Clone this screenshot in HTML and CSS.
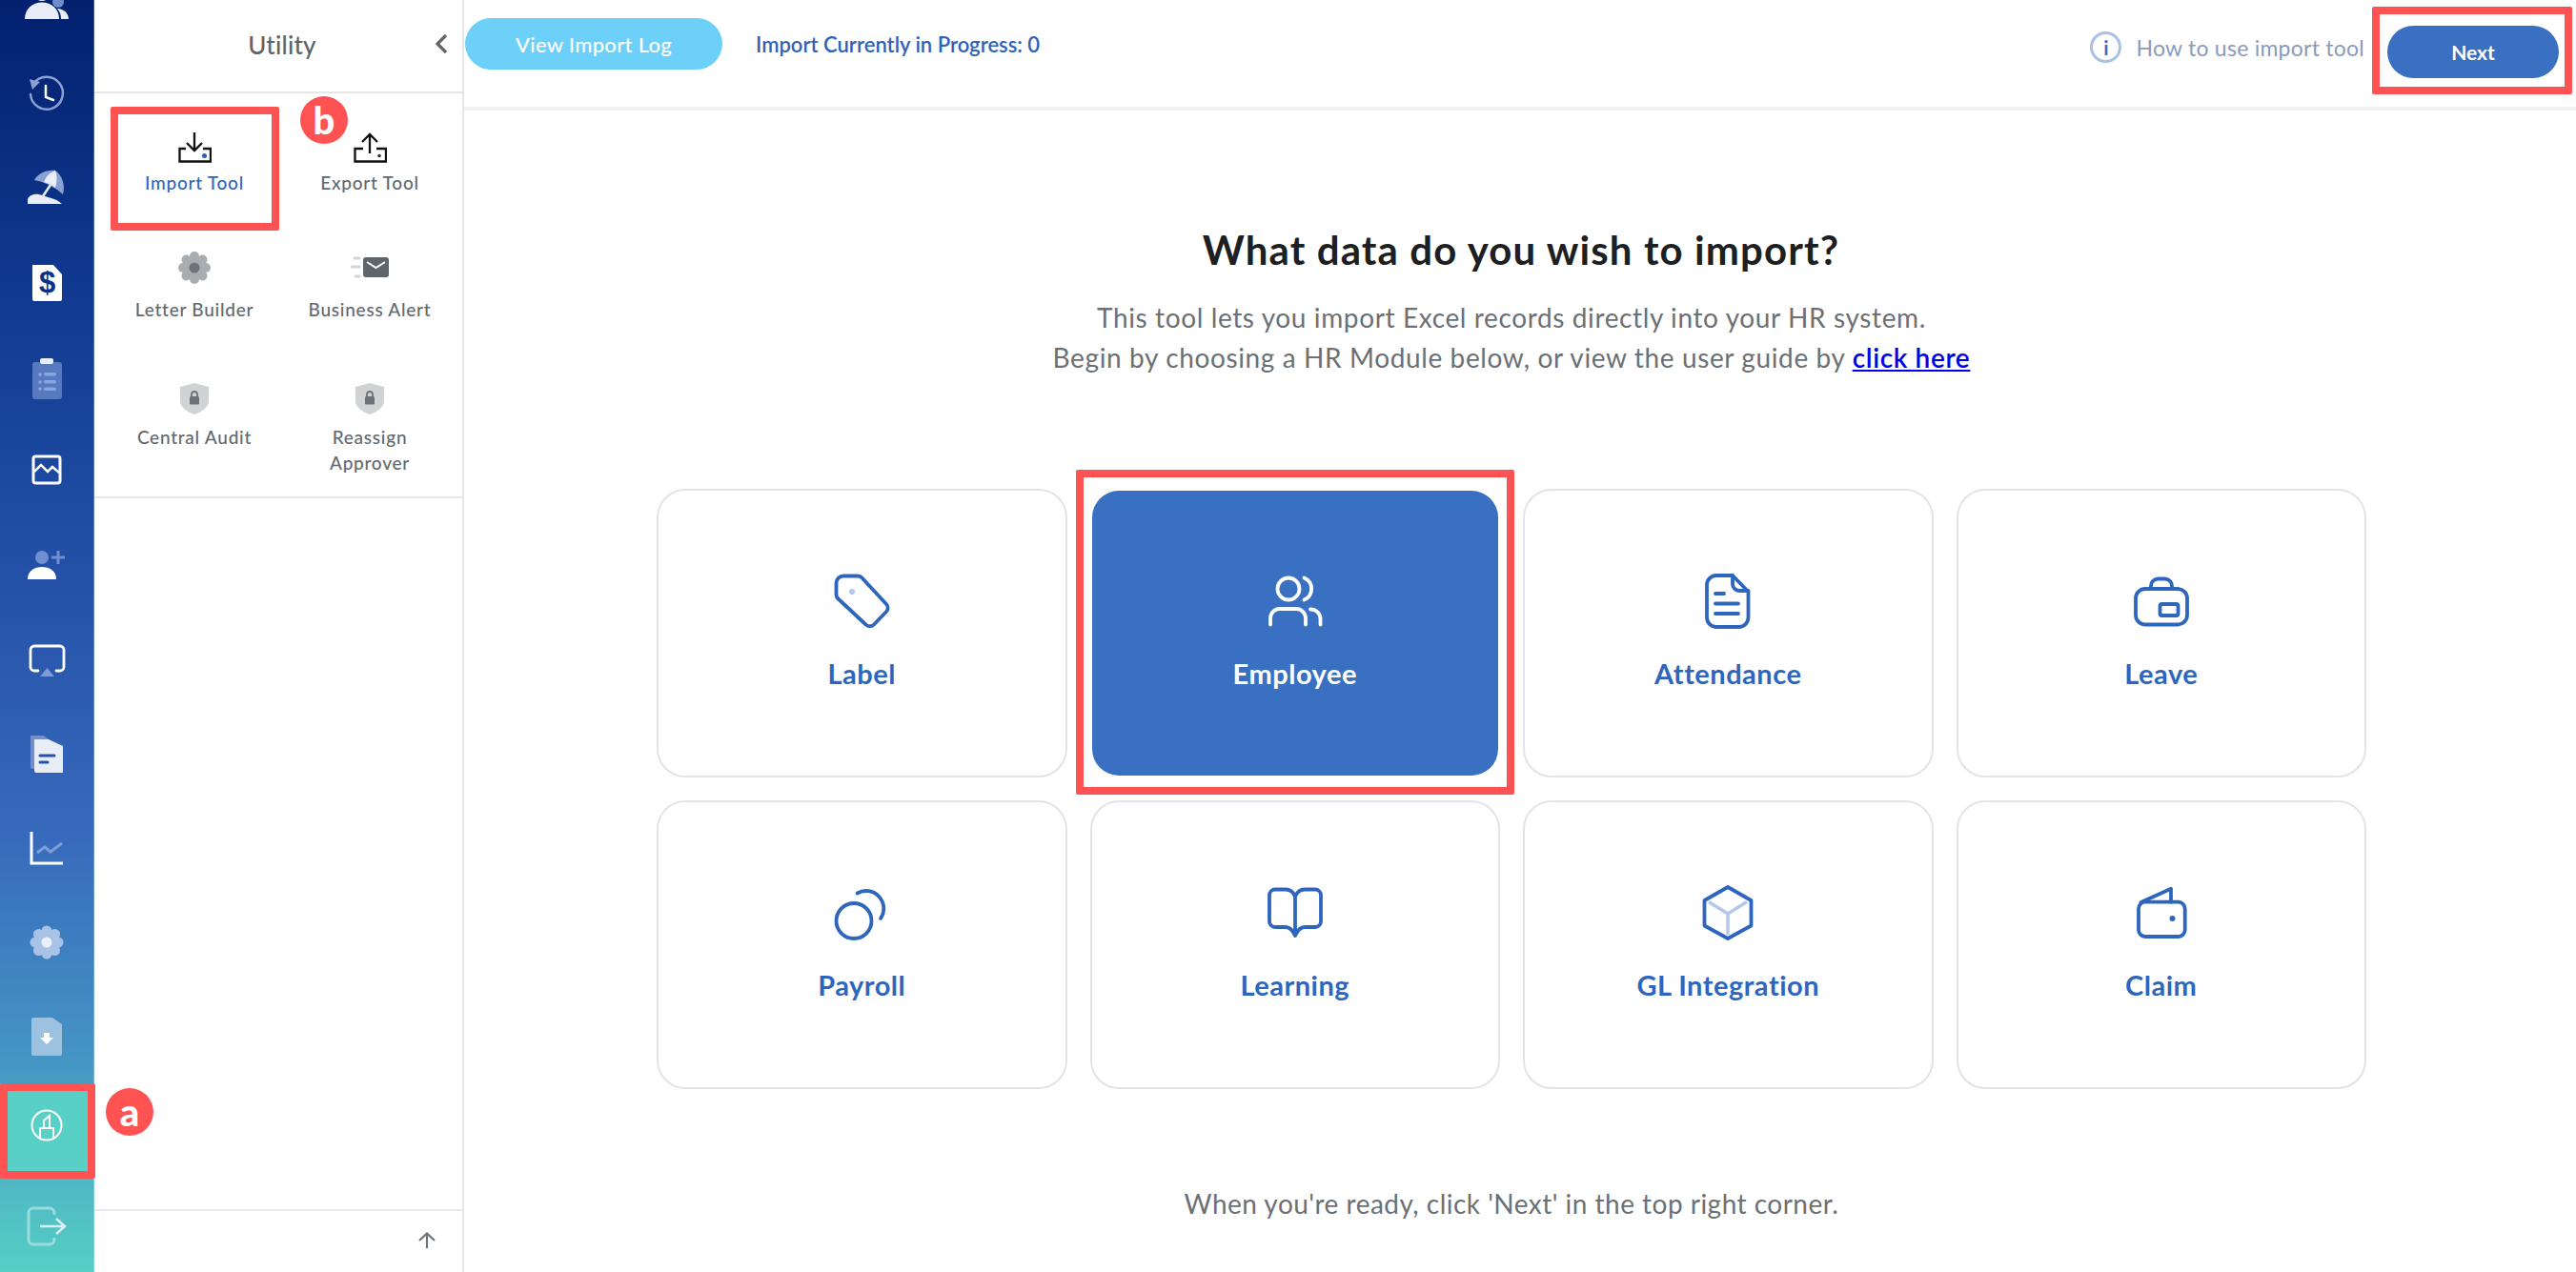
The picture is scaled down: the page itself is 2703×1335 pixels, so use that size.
FILE: index.html
```html
<!DOCTYPE html>
<html lang="en">
<head>
<meta charset="utf-8">
<title>Import Tool</title>
<link rel="stylesheet" href="styles.css">
</head>
<body>
<div class="app">
  <nav class="rail">
    <ul class="rail-list">
      <li class="rail-item"><svg class="ri" viewBox="0 0 48 48"><circle cx="19" cy="16" r="9" fill="#e8edf8"/><circle cx="36" cy="26" r="6" fill="#6f8ccb"/><path d="M1 44C1 33 9 26.500 19 26.500S37 33 37 44Z" fill="#e8edf8"/><path d="M35 33C42 33 47 38 47 44H39C39 40 38 36 35 33Z" fill="#e8edf8"/></svg></li>
      <li class="rail-item"><svg class="ri" viewBox="0 0 48 48"><path d="M10 13A17 17 0 1 1 7 24" fill="none" stroke="#8ca1d3" stroke-width="2.500" stroke-linecap="round"/><path d="M6 8l11 3-8 8Z" fill="#8ca1d3"/><path d="M23 15V27L31 30" fill="none" stroke="#fff" stroke-width="2.500" stroke-linecap="round"/></svg></li>
      <li class="rail-item"><svg class="ri" viewBox="0 0 48 48"><path d="M11 15C15 8 24 4 33 5C40 10 44 20 41 30Q28 18 11 15Z" fill="#8ca1d3"/><path d="M33 5C26 8 23 12 21 17Q28 19 33 23C35 17 35 10 33 5Z" fill="#e8edf8"/><path d="M28 20L20 32" stroke="#e8edf8" stroke-width="2.500"/><path d="M4 40V36C4 32 10 29 16 30C24 33 34 34 40 40Z" fill="#e8edf8"/></svg></li>
      <li class="rail-item"><svg class="ri" viewBox="0 0 48 48"><path d="M9 5H31L40 15V41A2 2 0 0 1 38 43H11A2 2 0 0 1 9 41Z" fill="#fff"/><text x="24.500" y="34" class="dollar">$</text></svg></li>
      <li class="rail-item"><svg class="ri" viewBox="0 0 48 48"><rect x="9" y="8" width="31" height="39" rx="3" fill="#5679c0"/><rect x="17" y="4" width="14" height="6" rx="2" fill="#e8edf8"/><g fill="#8ba6dc"><circle cx="17" cy="21" r="1.800"/><circle cx="17" cy="29" r="1.800"/><circle cx="17" cy="36" r="1.800"/><rect x="21" y="19" width="13" height="3.500" rx="1.700"/><rect x="21" y="27" width="13" height="3.500" rx="1.700"/><rect x="21" y="34.500" width="13" height="3.500" rx="1.700"/></g></svg></li>
      <li class="rail-item"><svg class="ri" viewBox="0 0 48 48"><rect x="10" y="9" width="28" height="28" rx="2.500" fill="none" stroke="#fff" stroke-width="3"/><path d="M11 25L18 18L25 25L30 20L37 26" fill="none" stroke="#fff" stroke-width="2.500"/></svg></li>
      <li class="rail-item"><svg class="ri" viewBox="0 0 48 48"><circle cx="19" cy="16" r="7" fill="#6f8fd0"/><path d="M4 39C4 30 11 26 19 26S34 30 34 39Z" fill="#fff"/><path d="M29 16H43M36 9V23" stroke="#6f8fd0" stroke-width="3"/></svg></li>
      <li class="rail-item"><svg class="ri" viewBox="0 0 48 48"><path d="M15 36H11A4 4 0 0 1 7 32V14A4 4 0 0 1 11 10H38A4 4 0 0 1 42 14V32A4 4 0 0 1 38 36H34" fill="none" stroke="#fff" stroke-width="2.800" stroke-linecap="round"/><path d="M17 42L24.500 33L32 42Z" fill="#7d9cd8"/></svg></li>
      <li class="rail-item"><svg class="ri" viewBox="0 0 48 48"><path d="M7 5H21L30 12V40H9A2 2 0 0 1 7 38Z" fill="#6f8fd0"/><path d="M11 9H26L41 16V44H13A2 2 0 0 1 11 42Z" fill="#e8edf8"/><path d="M17 26H32M17 33H25" stroke="#2553a9" stroke-width="3" stroke-linecap="round"/></svg></li>
      <li class="rail-item"><svg class="ri" viewBox="0 0 48 48"><path d="M8 7V40H41" fill="none" stroke="#fff" stroke-width="3"/><path d="M14 29L22 23L28 28L40 19" fill="none" stroke="#7d9cd8" stroke-width="3"/></svg></li>
      <li class="rail-item"><svg class="ri" viewBox="0 0 48 48"><g fill="#a9c3e8"><circle cx="24" cy="24" r="13"/><circle cx="24" cy="12" r="5.500"/><circle cx="24" cy="36" r="5.500"/><circle cx="12" cy="24" r="5.500"/><circle cx="36" cy="24" r="5.500"/><circle cx="15.500" cy="15.500" r="5.500"/><circle cx="32.500" cy="15.500" r="5.500"/><circle cx="15.500" cy="32.500" r="5.500"/><circle cx="32.500" cy="32.500" r="5.500"/></g><circle cx="24" cy="24" r="5.500" fill="#eaf1fb"/></svg></li>
      <li class="rail-item"><svg class="ri" viewBox="0 0 48 48"><path d="M8 6A2 2 0 0 1 10 4H30L40 11V42A2 2 0 0 1 38 44H10A2 2 0 0 1 8 42Z" fill="#9dc2e0"/><path d="M21 20H27V25H31L24 32L17 25H21Z" fill="#fff"/></svg></li>
      <li class="rail-item rail-item-active"><svg class="ri ri-up" viewBox="0 0 48 48"><ellipse cx="24" cy="24" rx="15.500" ry="15.500" fill="none" stroke="#fff" stroke-width="2"/><path d="M17 37V27H31V37M21 27V19L27 14V27" fill="none" stroke="#fff" stroke-width="2"/></svg></li>
      <li class="rail-item"><svg class="ri" viewBox="0 0 48 48"><path d="M32 13V11A5 5 0 0 0 27 6H10A5 5 0 0 0 5 11V39A5 5 0 0 0 10 44H27A5 5 0 0 0 32 39V37" fill="none" stroke="#9adbdc" stroke-width="3"/><path d="M17 25H42M34 17L43 25L34 33" fill="none" stroke="#d8f0f1" stroke-width="2.500"/></svg></li>
    </ul>
  </nav>

  <aside class="panel">
    <header class="panel-head">
      <h2 class="panel-title">Utility</h2>
      <svg class="panel-back" viewBox="0 0 16 24"><path d="M13 3L4 12L13 21" fill="none" stroke="#5e6468" stroke-width="3.200"/></svg>
    </header>
    <div class="tools">
      <div class="tool tool-current">
        <div class="tool-icon tg1"><svg class="ti" viewBox="0 0 36 36"><path d="M9 19H2.500V32.500H35V19H27" fill="none" stroke="#111" stroke-width="2.300"/><path d="M18 2V21M10 13L18 21L26 13" fill="none" stroke="#111" stroke-width="2.300"/><circle cx="28.500" cy="26.500" r="2.500" fill="#2c5fb5"/></svg></div>
        <span class="tool-label">Import Tool</span>
      </div>
      <div class="tool">
        <div class="tool-icon tg1"><svg class="ti" viewBox="0 0 36 36"><path d="M11 19H2.500V32.500H35V19H25" fill="none" stroke="#111" stroke-width="2.300"/><path d="M18 5V24M10 12L18 4L26 12" fill="none" stroke="#111" stroke-width="2.300"/><circle cx="28" cy="26.500" r="1.800" fill="#333"/></svg></div>
        <span class="tool-label">Export Tool</span>
      </div>
      <div class="tool">
        <div class="tool-icon tg2"><svg class="ti" viewBox="0 0 36 36"><g fill="#a9adb0"><circle cx="18" cy="18" r="12"/><circle cx="18" cy="6" r="5"/><circle cx="18" cy="30" r="5"/><circle cx="6" cy="18" r="5"/><circle cx="30" cy="18" r="5"/><circle cx="9.500" cy="9.500" r="5"/><circle cx="26.500" cy="9.500" r="5"/><circle cx="9.500" cy="26.500" r="5"/><circle cx="26.500" cy="26.500" r="5"/></g><circle cx="18" cy="18" r="5.500" fill="#6d7378"/></svg></div>
        <span class="tool-label">Letter Builder</span>
      </div>
      <div class="tool">
        <div class="tool-icon tg2"><svg class="ti ti-wide" viewBox="0 0 40 36"><rect x="13" y="7" width="27" height="21" rx="3" fill="#5e666c"/><path d="M17 12L26.500 18L36 12" fill="none" stroke="#fff" stroke-width="2"/><path d="M4 8H9M1 17H9M5 27H9" stroke="#d2d4d6" stroke-width="3" stroke-linecap="round"/></svg></div>
        <span class="tool-label">Business Alert</span>
      </div>
      <div class="tool">
        <div class="tool-icon tg3"><svg class="ti" viewBox="0 0 36 36"><path d="M18 2L33 6V21C33 27 26 32 18 35C10 32 3 27 3 21V6Z" fill="#d0d2d4"/><rect x="13" y="16" width="10" height="8.500" rx="1.200" fill="#6d7378"/><path d="M15 16V14A3 3 0 0 1 21 14V16" fill="none" stroke="#6d7378" stroke-width="1.800"/></svg></div>
        <span class="tool-label">Central Audit</span>
      </div>
      <div class="tool">
        <div class="tool-icon tg3"><svg class="ti" viewBox="0 0 36 36"><path d="M18 2L33 6V21C33 27 26 32 18 35C10 32 3 27 3 21V6Z" fill="#d0d2d4"/><rect x="13" y="16" width="10" height="8.500" rx="1.200" fill="#6d7378"/><path d="M15 16V14A3 3 0 0 1 21 14V16" fill="none" stroke="#6d7378" stroke-width="1.800"/></svg></div>
        <span class="tool-label">Reassign<br>Approver</span>
      </div>
    </div>
    <footer class="panel-foot">
      <svg class="panel-up" viewBox="0 0 20 20"><path d="M10 18V3M2 10L10 2.500L18 10" fill="none" stroke="#6d7378" stroke-width="2.200"/></svg>
    </footer>
  </aside>

  <main class="main">
    <div class="topbar">
      <button class="btn-log" type="button">View Import Log</button>
      <span class="status">Import Currently in Progress: 0</span>
      <span class="help">
        <span class="help-icon">i</span>
        <span>How to use import tool</span>
      </span>
      <button class="btn-next" type="button">Next</button>
    </div>
    <section class="content">
      <h1 class="title">What data do you wish to import?</h1>
      <p class="intro">This tool lets you import Excel records directly into your HR system.<br>Begin by choosing a HR Module below, or view the user guide by <a href="#" class="intro-link">click here</a></p>
      <div class="modules">
        <div class="module">
          <svg class="mi" viewBox="0 0 60 60"><path d="M11 3.500H26A6 6 0 0 1 30.500 5.500L56 33A6 6 0 0 1 56 41L43 54.500A6 6 0 0 1 34.500 54.500L5 27A6 6 0 0 1 3.500 23V11A7.500 7.500 0 0 1 11 3.500Z" class="ms"/><circle cx="20" cy="20" r="3" class="md"/></svg>
          <span class="module-name">Label</span>
        </div>
        <div class="module module-on">
          <svg class="mi" viewBox="0 0 60 60"><circle cx="23" cy="17" r="11.500" class="ms"/><path d="M39.500 5.500A12.500 12.500 0 0 1 39.500 28.500" class="ms"/><path d="M4 54.500V48A10 10 0 0 1 14 38H31A10 10 0 0 1 41 48V54.500" class="ms"/><path d="M46 38.500A10 10 0 0 1 56.500 48V54.500" class="ms"/></svg>
          <span class="module-name">Employee</span>
        </div>
        <div class="module">
          <svg class="mi" viewBox="0 0 60 60"><path d="M18 3H35L51.500 20V47A10 10 0 0 1 41.500 57H18A10 10 0 0 1 8 47V13A10 10 0 0 1 18 3Z" class="ms"/><path d="M35 3V12A7 7 0 0 0 42 19H51.500" class="ms"/><path d="M17 22H26M17 32.500H41M17 43H41" class="ms"/></svg>
          <span class="module-name">Attendance</span>
        </div>
        <div class="module">
          <svg class="mi" viewBox="0 0 60 60"><rect x="3" y="17" width="54" height="37.500" rx="10" class="ms"/><path d="M19 17V14A7.500 7.500 0 0 1 26.500 6.500H33.500A7.500 7.500 0 0 1 41 14V17" class="ms"/><rect x="28.500" y="33" width="19" height="12" rx="2" class="ms"/></svg>
          <span class="module-name">Leave</span>
        </div>
        <div class="module">
          <svg class="mi" viewBox="0 0 60 60"><circle cx="22" cy="38.500" r="18.500" class="ms"/><path d="M25.500 9.500A18.500 18.500 0 0 1 50 36" class="ms"/></svg>
          <span class="module-name">Payroll</span>
        </div>
        <div class="module">
          <svg class="mi" viewBox="0 0 60 60"><path d="M30 13Q27 5.500 20 5.500H9A6 6 0 0 0 3 11.500V39A6 6 0 0 0 9 45H20Q26 45 30 54Q34 45 40 45H51A6 6 0 0 0 57 39V11.500A6 6 0 0 0 51 5.500H40Q33 5.500 30 13V54" class="ms"/></svg>
          <span class="module-name">Learning</span>
        </div>
        <div class="module">
          <svg class="mi" viewBox="0 0 60 60"><path d="M10 18.500L30 31L50 18.500M30 31V53" class="ml"/><path d="M30 3L54.500 17V43.500L30 57L5.500 43.500V17Z" class="ms"/></svg>
          <span class="module-name">GL Integration</span>
        </div>
        <div class="module">
          <svg class="mi" viewBox="0 0 60 60"><rect x="6" y="18.700" width="48.700" height="36.300" rx="7" class="ms"/><path d="M8.500 19L40 4.700V18.700" class="ms"/><circle cx="41.500" cy="36" r="3" class="mf"/></svg>
          <span class="module-name">Claim</span>
        </div>
      </div>
      <p class="hint">When you're ready, click 'Next' in the top right corner.</p>
    </section>
  </main>
</div>

<div class="mark mark-rail"></div>
<div class="mark mark-tool"></div>
<div class="mark mark-module"></div>
<div class="mark mark-next"></div>
<div class="badge badge-a">a</div>
<div class="badge badge-b">b</div>
</body>
</html>
```

FILE: styles.css
```css
* { box-sizing: border-box; }
html, body { margin: 0; height: 100%; }
body {
  position: relative;
  height: 1335px;
  overflow: hidden;
  background: #fff;
  font-family: Lato, "Noto Sans", sans-serif;
  color: #6b7075;
}
.app { display: flex; height: 1335px; }

/* icon rail */
.rail {
  flex: 0 0 99px;
  height: 1335px;
  overflow: hidden;
  background: linear-gradient(180deg, #03206f 0%, #0f398f 22%, #234fa6 44%, #376abc 66%, #4492c4 82%, #56cfc4 100%);
  border-right: 1px solid rgba(255,255,255,.25);
}
.rail-list { list-style: none; margin: -49.500px 0 0; padding: 0; }
.rail-item {
  height: 98.900px;
  display: flex;
  align-items: center;
  justify-content: center;
}
.rail-item-active { background: #59d0c6; }
.ri { width: 48px; height: 48px; display: block; }
.ri-up { margin-bottom: 12px; }
.dollar { font: 700 31px "Liberation Sans", sans-serif; fill: #0d2f8c; text-anchor: middle; }

/* utility panel */
.panel {
  flex: 0 0 388px;
  display: flex;
  flex-direction: column;
  border-right: 2px solid #e6e6e6;
}
.panel-head {
  height: 98px;
  flex: none;
  border-bottom: 2px solid #e6e6e6;
  display: flex;
  align-items: center;
  justify-content: center;
  position: relative;
  padding: 0 0 2px 8px;
}
.panel-title { margin: 0; font-size: 26px; font-weight: 500; color: #5e6468; letter-spacing: .2px; }
.panel-back { position: absolute; right: 14px; top: 34px; width: 16px; height: 24px; }
.tools {
  display: grid;
  grid-template-columns: 184px 184px;
  grid-auto-rows: 133.500px;
  padding-left: 13px;
  height: 425px;
  flex: none;
  border-bottom: 2px solid #e6e6e6;
}
.tool { display: flex; flex-direction: column; align-items: center; text-align: center; }
.tool-icon { height: 79.500px; display: flex; align-items: flex-end; flex: none; }
.tg1 { padding-bottom: 4.500px; }
.tg2 { padding-bottom: 12.500px; }
.tg3 { padding-bottom: 8.500px; }
.ti { width: 36px; height: 36px; display: block; }
.ti-wide { width: 40px; }
.tool-label { font-size: 19px; line-height: 27px; color: #62696e; font-weight: 500; letter-spacing: .75px; }
.tool-current .tool-label { color: #2f66bd; }
.panel-foot {
  margin-top: auto;
  height: 66px;
  border-top: 2px solid #e9e9e9;
  display: flex;
  justify-content: flex-end;
  padding: 21px 27px 0 0;
}
.panel-up { width: 20px; height: 20px; }

/* main */
.main { flex: 1; min-width: 0; display: flex; flex-direction: column; }
.topbar {
  height: 116px;
  flex: none;
  border-bottom: 4px solid #f0f0f0;
  display: flex;
  align-items: flex-start;
  padding-right: 18px;
}
.btn-log {
  margin: 19px 0 0 1px;
  width: 270px;
  height: 54px;
  border: 0;
  border-radius: 27px;
  background: #6dd0f8;
  color: #fff;
  font: 500 22px Lato, sans-serif;
  letter-spacing: .3px;
}
.status { margin: 33px 0 0 35px; font-size: 22px; line-height: 28px; font-weight: 600; color: #2f62b8; }
.help { margin: 33px 24px 0 auto; display: flex; align-items: center; gap: 15px; font-size: 23px; line-height: 32px; color: #8b9bb8; letter-spacing: .25px; }
.help-icon {
  width: 33px;
  height: 33px;
  border: 3px solid #a9c1e6;
  border-radius: 50%;
  display: flex;
  align-items: center;
  justify-content: center;
  font-size: 21px;
  font-weight: 700;
  color: #3a70c1;
}
.btn-next {
  margin-top: 27px;
  width: 180px;
  height: 55px;
  border: 0;
  border-radius: 28px;
  background: #3a70c1;
  color: #fff;
  font: 700 21px Lato, sans-serif;
}
.content { flex: 1; padding-right: 18px; display: flex; flex-direction: column; align-items: center; }
.title { margin: 122px 0 0 20px; font-size: 42px; line-height: 48px; font-weight: 700; color: #1d1f22; letter-spacing: 1.100px; }
.intro { margin: 26px 0 0; text-align: center; font-size: 28px; line-height: 42px; color: #6b7075; letter-spacing: .62px; }
.intro-link { color: #0000ee; font-weight: 600; }
.modules {
  margin-top: 117px;
  width: 1794px;
  display: grid;
  grid-template-columns: repeat(4, 1fr);
  grid-auto-rows: 303px;
  gap: 24px;
}
.module {
  border: 2px solid #e2e4ea;
  border-radius: 30px;
  display: flex;
  flex-direction: column;
  align-items: center;
  padding-top: 86px;
  color: #2f66bd;
  background: #fff;
}
.module-on { background: #3a70c1; background-clip: padding-box; border-color: transparent; color: #fff; }
.mi { width: 60px; height: 60px; display: block; flex: none; }
.ms { fill: none; stroke: #2f66bd; stroke-width: 3.800; stroke-linecap: round; stroke-linejoin: round; }
.md { fill: #b3c7e8; }
.mf { fill: #2f66bd; }
.ml { fill: none; stroke: #b3c7e8; stroke-width: 3.500; }
.module-on .ms { stroke: #fff; }
.module-name { margin-top: 28px; font-size: 29px; line-height: 36px; font-weight: 700; letter-spacing: .5px; }
.hint { margin: 103px 0 0; font-size: 28px; line-height: 34px; color: #6b7075; letter-spacing: .48px; }

/* annotations laid over the screenshot */
.mark { position: absolute; border: 8px solid #ff5252; border-radius: 2px; }
.mark-rail { left: 0; top: 1137px; width: 100px; height: 100px; }
.mark-tool { left: 116px; top: 112px; width: 177px; height: 130px; }
.mark-module { left: 1129px; top: 493px; width: 460px; height: 341px; }
.mark-next { left: 2489px; top: 7px; width: 210px; height: 92px; }
.badge {
  position: absolute;
  width: 50px;
  height: 50px;
  border-radius: 50%;
  background: #ff5252;
  color: #fff;
  display: flex;
  align-items: center;
  justify-content: center;
  font: 900 40px Lato, sans-serif;
}
.badge-a { left: 111px; top: 1142px; }
.badge-b { left: 315px; top: 101px; }
```
